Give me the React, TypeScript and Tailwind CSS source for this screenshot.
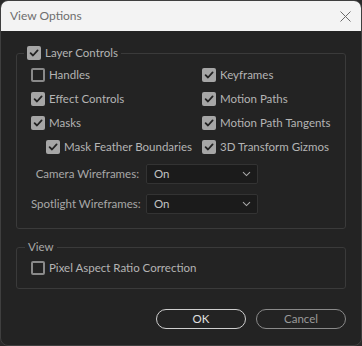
import React from "react";

function Check({ checked }: { checked: boolean }) {
  if (!checked) {
    return <span className="block w-[14px] h-[14px] shrink-0 rounded-[2px] border-2 border-[#8a8a8a]" />;
  }
  return (
    <span className="flex items-center justify-center w-[14px] h-[14px] shrink-0 rounded-[2px] bg-[#a6a6a6]">
      <svg width="10" height="10" viewBox="0 0 10 10" fill="none">
        <path d="M1.6 5.2 L4 7.5 L8.6 2.4" stroke="#232323" strokeWidth="1.8" strokeLinecap="round" strokeLinejoin="round" />
      </svg>
    </span>
  );
}

function Option({ label, checked, className = "" }: { label: string; checked: boolean; className?: string }) {
  return (
    <div className={`flex items-center gap-[4px] h-[24px] ${className}`}>
      <Check checked={checked} />
      <span className="text-[#b4b4b4] whitespace-nowrap">{label}</span>
    </div>
  );
}

function Dropdown({ label, value }: { label: string; value: string }) {
  return (
    <div className="flex items-center gap-[7px] h-[20px]">
      <span className="w-[108px] text-right text-[#a8a8a8] whitespace-nowrap">{label}</span>
      <div className="flex items-center justify-between w-[112px] h-[20px] pl-[7px] pr-[6px] bg-[#1b1b1b] border border-[#333333] rounded-[2px]">
        <span className="text-[#c4c4c4]">{value}</span>
        <svg width="9" height="6" viewBox="0 0 9 6" fill="none">
          <path d="M1 1.2 L4.5 4.6 L8 1.2" stroke="#a8a8a8" strokeWidth="1.1" />
        </svg>
      </div>
    </div>
  );
}

export default function App() {
  return (
    <div className="w-[362px] h-[346px] bg-[#2a2a2a]">
      <div
        className="w-[362px] h-[346px] flex flex-col rounded-lg overflow-hidden border border-[#3f3f3f] bg-[#232323] text-[11.5px]"
        style={{ fontFamily: "Lato, 'Open Sans', sans-serif" }}
      >
        {/* Title bar */}
        <div className="flex items-center justify-between h-[30px] shrink-0 bg-[#f3f3f3] pl-[9px] pr-[10px]">
          <span className="text-[12px] text-[#6e6e6e]">View Options</span>
          <svg width="11" height="11" viewBox="0 0 11 11" fill="none">
            <path d="M0.5 0.5 L10.5 10.5 M10.5 0.5 L0.5 10.5" stroke="#6a6a6a" strokeWidth="1" />
          </svg>
        </div>

        <div className="flex flex-col px-[15px]">
          {/* Layer Controls group */}
          <fieldset className="mt-[14px] border border-[#3a3a3a] rounded-[3px] pl-[14px] pt-[2px] pb-[14px]">
            <legend className="flex items-center gap-[4px] h-[16px] px-[3px] ml-[-7px]">
              <Check checked />
              <span className="text-[#b4b4b4]">Layer Controls</span>
            </legend>
            <div className="grid grid-cols-[171px_1fr]">
              <Option label="Handles" checked={false} />
              <Option label="Keyframes" checked />
              <Option label="Effect Controls" checked />
              <Option label="Motion Paths" checked />
              <Option label="Masks" checked />
              <Option label="Motion Path Tangents" checked />
              <Option label="Mask Feather Boundaries" checked className="pl-[15px]" />
              <Option label="3D Transform Gizmos" checked />
            </div>
            <div className="flex flex-col gap-[10px] mt-[5px]">
              <Dropdown label="Camera Wireframes:" value="On" />
              <Dropdown label="Spotlight Wireframes:" value="On" />
            </div>
          </fieldset>

          {/* View group */}
          <fieldset className="mt-[11px] border border-[#3a3a3a] rounded-[3px] pl-[14px] pt-[2px] pb-[8px]">
            <legend className="h-[14px] leading-[14px] px-[3px] ml-[-6px] text-[#a8a8a8]">View</legend>
            <Option label="Pixel Aspect Ratio Correction" checked={false} />
          </fieldset>

          {/* Buttons */}
          <div className="flex justify-end gap-[10px] mt-[20px]">
            <button className="w-[90px] h-[20px] rounded-full border-[1.5px] border-[#cfcfcf] text-[#e0e0e0] leading-none">
              OK
            </button>
            <button className="w-[90px] h-[20px] rounded-full border-[1.5px] border-[#8a8a8a] text-[#9a9a9a] leading-none">
              Cancel
            </button>
          </div>
        </div>
      </div>
    </div>
  );
}
